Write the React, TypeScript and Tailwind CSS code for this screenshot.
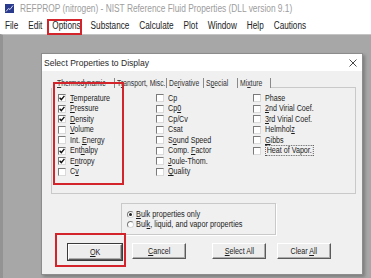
import React from "react";

function Label({ t }: { t: string }) {
  const i = t.indexOf("&");
  if (i < 0) return <>{t}</>;
  return (
    <>
      {t.slice(0, i)}
      <span className="underline decoration-1 underline-offset-[1px]">{t[i + 1]}</span>
      {t.slice(i + 2)}
    </>
  );
}

function Check({ checked }: { checked?: boolean }) {
  return (
    <span className="w-[8px] h-[8px] shrink-0 bg-white border border-t-[#7a7a7a] border-l-[#7a7a7a] border-b-[#dadada] border-r-[#dadada] flex items-center justify-center">
      {checked && (
        <svg width="6" height="6" viewBox="0 0 6 6">
          <path d="M0.6 2.8 L2.3 4.6 L5.4 0.9" fill="none" stroke="#111" strokeWidth="1.4" />
        </svg>
      )}
    </span>
  );
}

function Radio({ on }: { on?: boolean }) {
  return (
    <span className="w-[7px] h-[7px] shrink-0 rounded-full bg-white border border-t-[#7a7a7a] border-l-[#7a7a7a] border-b-[#dadada] border-r-[#dadada] flex items-center justify-center">
      {on && <span className="w-[3px] h-[3px] rounded-full bg-[#222]" />}
    </span>
  );
}

function Row({ label, checked, focus }: { label: string; checked?: boolean; focus?: boolean }) {
  return (
    <div className="h-[10.5px] flex items-center gap-[4px]">
      <Check checked={checked} />
      <span className="inline-block origin-left scale-x-[0.84] whitespace-nowrap">
        <span className={focus ? "inline-block leading-[9px] border border-dotted border-[#555] px-[1px]" : "inline-block leading-[10px]"}>
          <Label t={label} />
        </span>
      </span>
    </div>
  );
}

function Btn({ label }: { label: string }) {
  return (
    <div className="w-[54px] h-[16px] bg-[#ededed] border border-t-white border-l-white border-b-[#5a5a5a] border-r-[#5a5a5a] shadow-[inset_-1px_-1px_0_#acacac] flex items-center justify-center leading-[10px]">
      <span className="inline-block scale-x-[0.84] whitespace-nowrap">
        <Label t={label} />
      </span>
    </div>
  );
}

const col1: [string, boolean][] = [
  ["&Temperature", true],
  ["&Pressure", true],
  ["&Density", true],
  ["&Volume", false],
  ["Int. &Energy", false],
  ["Ent&halpy", true],
  ["E&ntropy", true],
  ["C&v", false],
];
const col2 = ["Cp", "Cp&0", "Cp/Cv", "Csat", "S&ound Speed", "Comp. &Factor", "&Joule-Thom.", "&Quality"];
const col3 = ["Phase", "&2nd Virial Coef.", "&3rd Virial Coef.", "Helmhol&z", "&Gibbs", "Heat of Vapor."];

const tabs: [string, string][] = [
  ["&Thermodynamic", "w-[60px]"],
  ["T&ransport, Misc.", "w-[52px]"],
  ["De&rivative", "w-[37px]"],
  ["S&pecial", "w-[34px]"],
  ["Mi&xture", "w-[33px]"],
];
const menu = ["File", "Edit", "Options", "Substance", "Calculate", "Plot", "Window", "Help", "Cautions"];

export default function App() {
  return (
    <div className="relative w-[371px] h-[278px] overflow-hidden flex flex-col bg-[#a7a7a7] font-['Liberation_Sans',Arial,sans-serif]">
      {/* title bar */}
      <div className="h-[17px] bg-white flex items-center pl-[5px] gap-[6px] shrink-0">
        <svg width="9" height="9" viewBox="0 0 9 9" className="shrink-0">
          <rect width="9" height="9" fill="#2a3a8c" />
          <path d="M1 7.5 L3.5 4.5 L5 5.5 L8 1.5" stroke="#e8e8ff" strokeWidth="0.9" fill="none" />
        </svg>
        <span className="inline-block origin-left scale-x-[0.835] whitespace-nowrap text-[10px] text-[#9d9d9d] leading-none">
          REFPROP (nitrogen) - NIST Reference Fluid Properties (DLL version 9.1)
        </span>
      </div>
      {/* menu bar */}
      <div className="h-[17px] bg-white shrink-0 pl-[5px] flex items-center">
        <div className="flex items-center gap-[12.2px] origin-left scale-x-[0.82] text-[10px] text-[#222] leading-none whitespace-nowrap">
          {menu.map((m) => (
            <span key={m}>{m}</span>
          ))}
        </div>
      </div>
      {/* MDI area */}
      <div className="flex-1 border-l-[3px] border-l-[#939393] border-t border-t-[#c4c4c4] pl-[38px] pt-[18px]">
        {/* dialog */}
        <div className="w-[322px] h-[222px] bg-[#f0f0f0] border border-[#8c8c8c] shadow-[2px_2px_3px_rgba(0,0,0,0.25)] flex flex-col text-[8.5px] text-[#1c1c1c]">
          <div className="h-[17px] bg-white flex items-center justify-between pl-[2px] pr-[5px] shrink-0">
            <span className="inline-block origin-left scale-x-[0.9] whitespace-nowrap text-[9.5px] text-[#2a2a2a] leading-none">
              Select Properties to Display
            </span>
            <svg width="8" height="8" viewBox="0 0 8 8">
              <path d="M0.5 0.5 L7.5 7.5 M7.5 0.5 L0.5 7.5" stroke="#333" strokeWidth="0.9" />
            </svg>
          </div>
          <div className="pl-[9px] flex flex-col">
            {/* tabs */}
            <div className="w-[305px] h-[17px] flex items-end">
              <div className="w-[4px] h-[1px]" />
              {tabs.map(([t, w]) => (
                <div key={t} className={`${w} h-[10px] pl-[2px] border-r border-r-[#8a8a8a] leading-[10px] text-[#333] whitespace-nowrap overflow-hidden`}>
                  <span className="inline-block origin-left scale-x-[0.8]">
                    <Label t={t} />
                  </span>
                </div>
              ))}
              <div className="flex-1 border-b border-b-[#c9c9c9]" />
            </div>
            {/* panel */}
            <div className="w-[305px] h-[106px] border border-t-0 border-[#c9c9c9] pl-[6px] pt-[5px] flex">
              <div className="w-[98px] flex flex-col">
                {col1.map(([l, c]) => (
                  <Row key={l} label={l} checked={c} />
                ))}
              </div>
              <div className="w-[97px] flex flex-col">
                {col2.map((l) => (
                  <Row key={l} label={l} />
                ))}
              </div>
              <div className="flex-1 flex flex-col">
                {col3.map((l) => (
                  <Row key={l} label={l} focus={l === "Heat of Vapor."} />
                ))}
              </div>
            </div>
            {/* radio group */}
            <div className="ml-[70px] mt-[9px] w-[155px] h-[32px] border border-[#c9c9c9] shadow-[1px_1px_0_white] pl-[5px] pt-[5px] flex flex-col">
              <div className="h-[10px] flex items-center gap-[2px]">
                <Radio on />
                <span className="inline-block origin-left scale-x-[0.86] whitespace-nowrap leading-[10px]">
                  <Label t="&Bulk properties only" />
                </span>
              </div>
              <div className="h-[10px] flex items-center gap-[2px]">
                <Radio />
                <span className="inline-block origin-left scale-x-[0.86] whitespace-nowrap leading-[10px]">
                  <Label t="Bul&k, liquid, and vapor properties" />
                </span>
              </div>
            </div>
            {/* buttons */}
            <div className="mt-[8px] ml-[16px] flex items-start">
              <div className="border border-[#3a3a3a]">
                <Btn label="&OK" />
              </div>
              <div className="ml-[9px]">
                <Btn label="&Cancel" />
              </div>
              <div className="ml-[26px]">
                <Btn label="&Select All" />
              </div>
              <div className="ml-[11px]">
                <Btn label="Clear &All" />
              </div>
            </div>
          </div>
        </div>
      </div>

      {/* red annotation boxes */}
      <div className="absolute left-[47px] top-[19px] w-[35px] h-[16px] border-2 border-[#d3232b]" />
      <div className="absolute left-[53px] top-[82px] w-[71px] h-[103px] border-2 border-[#d3232b]" />
      <div className="absolute left-[55px] top-[233px] w-[71px] h-[34px] border-2 border-[#d3232b]" />
    </div>
  );
}
